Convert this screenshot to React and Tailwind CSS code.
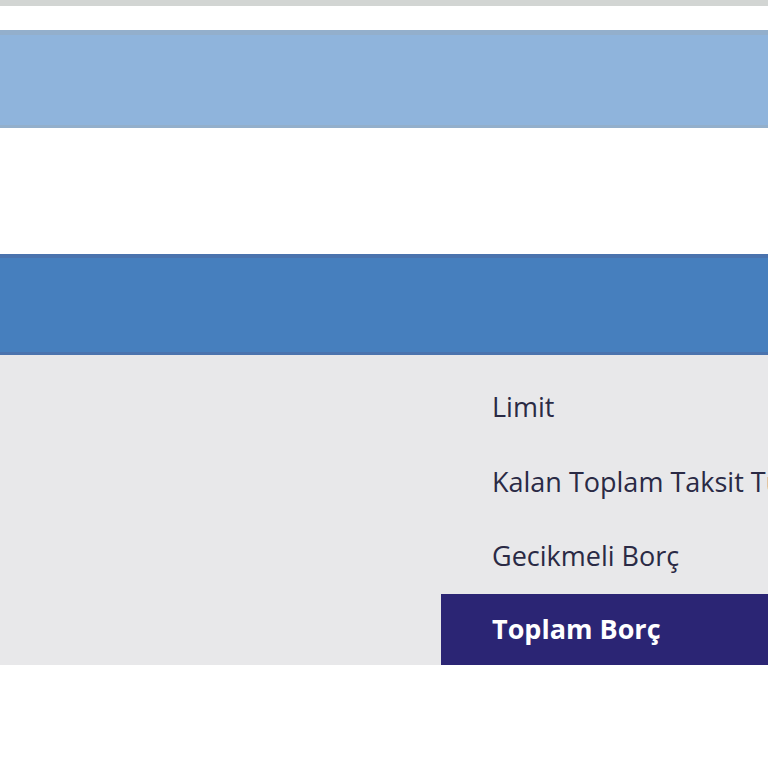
export default function App() {
  const font = { fontFamily: '"Open Sans", "Noto Sans", sans-serif' };
  return (
    <div className="w-[768px] h-[768px] overflow-hidden bg-white flex flex-col" style={font}>
      <div className="h-[6px] shrink-0 bg-[#d2d5d3]" />
      <div className="h-[24px] shrink-0 bg-white" />
      <div className="h-[98px] shrink-0 bg-[#8fb4dc] border-t-[5px] border-t-[#93afcc] border-b-[3px] border-b-[#93afcb]" />
      <div className="h-[126px] shrink-0 bg-white" />
      <div className="h-[101px] shrink-0 bg-[#467fbe] border-t-[4px] border-t-[#4a73ae] border-b-[3px] border-b-[#4a73ae]" />
      <div className="h-[310px] shrink-0 bg-[#e8e8ea] flex">
        <div className="w-[441px] shrink-0" />
        <div className="flex-1 min-w-0 overflow-hidden flex flex-col pt-[15px]">
          <div className="h-[75px] flex items-center pl-[51px] text-[27px] text-[#2a2a45] whitespace-nowrap">Limit</div>
          <div className="h-[74px] flex items-center pl-[51px] text-[27px] text-[#2a2a45] whitespace-nowrap">Kalan Toplam Taksit Tutarı</div>
          <div className="h-[75px] flex items-center pl-[51px] text-[27px] text-[#2a2a45] whitespace-nowrap">Gecikmeli Borç</div>
          <div className="h-[71px] flex items-center pl-[51px] text-[27px] font-bold text-white bg-[#2b2574] whitespace-nowrap">Toplam Borç</div>
        </div>
      </div>
      <div className="flex-1 bg-white" />
    </div>
  );
}
